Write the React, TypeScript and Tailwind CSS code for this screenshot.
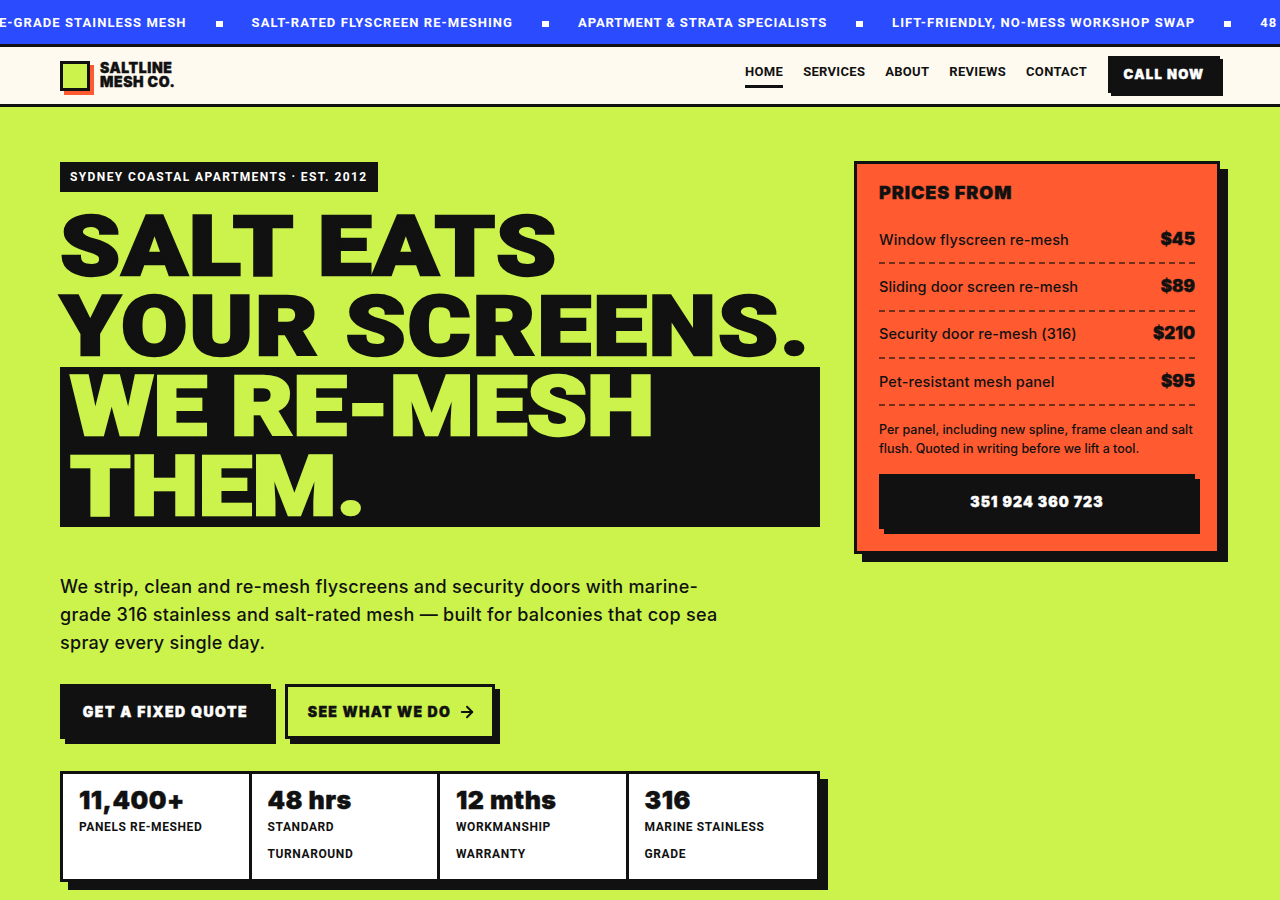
import { ArrowRight } from "lucide-react";

const heavy = "font-['Inter'] font-black";
const display = "font-['Roboto'] font-black";
const label = "font-['Roboto'] font-bold";
const body = "font-['Inter'] font-medium";
const thick = "[-webkit-text-stroke:0.4px_currentColor]";

const ticker = [
  "MARINE-GRADE STAINLESS MESH",
  "SALT-RATED FLYSCREEN RE-MESHING",
  "APARTMENT & STRATA SPECIALISTS",
  "LIFT-FRIENDLY, NO-MESS WORKSHOP SWAP",
  "48 HR TURNAROUND",
];

const navItems = ["HOME", "SERVICES", "ABOUT", "REVIEWS", "CONTACT"];

const prices = [
  ["Window flyscreen re-mesh", "$45"],
  ["Sliding door screen re-mesh", "$89"],
  ["Security door re-mesh (316)", "$210"],
  ["Pet-resistant mesh panel", "$95"],
];

const stats = [
  ["11,400+", ["PANELS RE-MESHED"]],
  ["48 hrs", ["STANDARD", "TURNAROUND"]],
  ["12 mths", ["WORKMANSHIP", "WARRANTY"]],
  ["316", ["MARINE STAINLESS", "GRADE"]],
] as const;

const h1Line = "block origin-left scale-x-[1.146] whitespace-nowrap [-webkit-text-stroke:2.5px_currentColor]";

export default function App() {
  return (
    <div className="w-[1280px] h-[900px] overflow-hidden bg-[#cbf34c] text-[#111111]">
      <div className="h-[47px] bg-[#2b4bff] border-b-[3px] border-[#111111] overflow-hidden flex items-center pt-[2px]">
        <div className={`flex items-center ml-[-48px] gap-[29px] whitespace-nowrap text-white text-[13px] ${label}`}>
          {ticker.map((t, i) => (
            <div key={t} className="flex items-center gap-[29px]">
              <span className={i === 2 ? "tracking-[0.88px]" : "tracking-[1.08px]"}>{t}</span>
              <span className="block w-[7px] h-[6px] bg-white mt-[1px]" />
            </div>
          ))}
        </div>
      </div>

      <header className="h-[60px] bg-[#fffaf0] border-b-[3px] border-[#111111] px-[60px] flex items-center justify-between">
        <div className="flex items-center gap-[10px] mt-[1px]">
          <div className="w-[30px] h-[30px] bg-[#cbf34c] border-[3px] border-[#111111] shadow-[4px_4px_0_#ff5a30]" />
          <div className={`-mt-[2px] text-[14px] leading-[14px] tracking-[0.6px] ${heavy} ${thick}`}>
            SALTLINE
            <br />
            MESH CO.
          </div>
        </div>
        <nav className="flex items-start -mt-[1px]">
          <div className={`flex gap-[20px] text-[13px] tracking-[0.3px] ${label}`}>
            {navItems.map((n, i) => (
              <a
                key={n}
                className={`block pt-[6px] h-[31px] leading-[18px] border-b-[3px] ${i === 0 ? "border-[#111111]" : "border-transparent"}`}
              >
                {n}
              </a>
            ))}
          </div>
          <a className={`ml-[21px] w-[112px] h-[37px] -mt-[1px] flex items-center justify-center bg-[#111111] text-white text-[13px] tracking-[1.3px] shadow-[3px_3px_0_#111111] ${heavy} ${thick}`}>
            CALL NOW
          </a>
        </nav>
      </header>

      <main className="grid grid-cols-[760px_366px] gap-[34px] px-[60px] pt-[54px]">
        <div>
          <div className={`mt-px inline-flex h-[30px] items-center px-[10px] bg-[#111111] text-white text-[12px] tracking-[1.4px] ${label}`}>
            SYDNEY COASTAL APARTMENTS · EST. 2012
          </div>
          <h1 className={`mt-[15px] text-[84px] leading-[80px] ${display}`}>
            <span className={`${h1Line} tracking-[1.3px]`}>SALT EATS</span>
            <span className={`${h1Line} tracking-[1.6px]`}>YOUR SCREENS.</span>
            <span className="block bg-[#111111] text-[#cbf34c] pl-[10px]">
              <span className={`${h1Line} tracking-[-0.3px]`}>WE RE-MESH</span>
              <span className={h1Line}>THEM.</span>
            </span>
          </h1>
          <p className={`mt-[46px] text-[18px] leading-[28px] tracking-[0.3px] whitespace-nowrap ${body}`}>
            We strip, clean and re-mesh flyscreens and security doors with marine-
            <br />
            grade 316 stainless and salt-rated mesh — built for balconies that cop sea
            <br />
            spray every single day.
          </p>
          <div className="mt-[27px] flex gap-[14px]">
            <a className={`w-[211px] h-[55px] flex items-center justify-center bg-[#111111] text-white text-[14px] tracking-[1.5px] shadow-[5px_5px_0_#111111] ${heavy} ${thick}`}>
              GET A FIXED QUOTE
            </a>
            <a className={`w-[210px] h-[55px] pl-[4px] flex items-center justify-center gap-[7px] border-[3px] border-[#111111] text-[14px] tracking-[1.35px] shadow-[5px_5px_0_#111111] ${heavy} ${thick}`}>
              SEE WHAT WE DO
              <ArrowRight size={18} strokeWidth={2.5} />
            </a>
          </div>
          <div className="mt-[32px] h-[111px] grid grid-cols-4 border-[3px] border-[#111111] bg-white shadow-[8px_8px_0_#111111]">
            {stats.map(([num, lines], i) => (
              <div
                key={num}
                className={`px-[16px] pt-[11px] ${i < 3 ? "border-r-[3px] border-[#111111]" : ""}`}
              >
                <div className={`text-[25px] leading-[30px] tracking-[0.5px] ${heavy} ${thick}`}>{num}</div>
                <div className={`mt-[-1px] text-[12px] leading-[27px] tracking-[0.6px] ${label}`}>
                  {lines.map((l) => (
                    <div key={l}>{l}</div>
                  ))}
                </div>
              </div>
            ))}
          </div>
        </div>

        <aside className="self-start h-[393px] bg-[#ff5a30] border-[3px] border-[#111111] shadow-[8px_8px_0_#111111] px-[22px] pt-[17px]">
          <h2 className={`text-[18px] leading-[24px] tracking-[0.95px] ${heavy} ${thick}`}>PRICES FROM</h2>
          <div className="mt-[12px]">
            {prices.map(([name, price]) => (
              <div
                key={name}
                className="h-[47.3px] flex items-center justify-between border-b-2 border-dashed border-[#111111]/60"
              >
                <span className={`text-[14.5px] tracking-[0.1px] ${body}`}>{name}</span>
                <span className={`text-[17px] ${heavy} ${thick}`}>{price}</span>
              </div>
            ))}
          </div>
          <p className={`mt-[14px] text-[12.5px] leading-[19px] whitespace-nowrap text-[#111111] ${body}`}>
            Per panel, including new spline, frame clean and salt
            <br />
            flush. Quoted in writing before we lift a tool.
          </p>
          <a className={`mt-[16px] h-[55px] w-[316px] flex items-center justify-center bg-[#111111] text-white text-[14px] tracking-[1.1px] shadow-[5px_5px_0_#111111] ${heavy} ${thick}`}>
            351 924 360 723
          </a>
        </aside>
      </main>
    </div>
  );
}
